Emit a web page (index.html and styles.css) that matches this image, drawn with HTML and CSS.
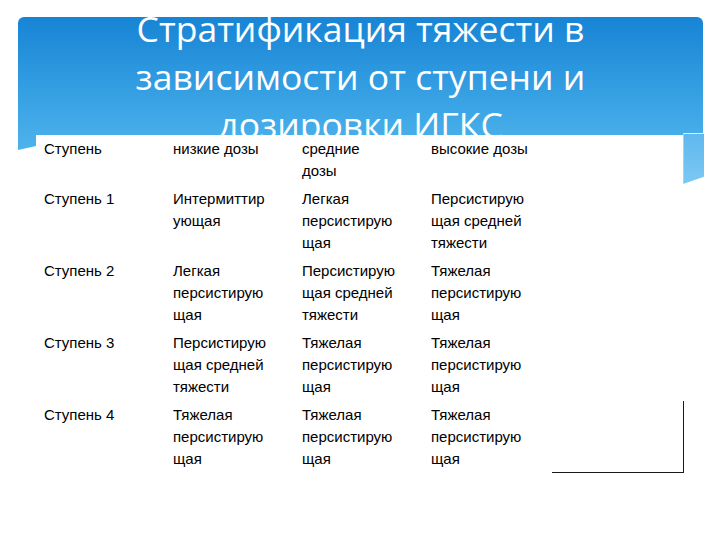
FILE: index.html
```html
<!DOCTYPE html>
<html lang="ru">
<head>
<meta charset="utf-8">
<title>Стратификация тяжести</title>
<link rel="stylesheet" href="styles.css">
</head>
<body>
<div class="slide">
  <div class="banner">
    <h1 class="title">Стратификация тяжести в<br>зависимости от ступени и<br>дозировки ИГКС</h1>
  </div>
  <div class="content">
    <table class="grid">
      <tr><td>Ступень</td><td>низкие дозы</td><td>средние<br>дозы</td><td>высокие дозы</td></tr>
      <tr><td>Ступень 1</td><td>Интермиттир<br>ующая</td><td>Легкая<br>персистирую<br>щая</td><td>Персистирую<br>щая средней<br>тяжести</td></tr>
      <tr><td>Ступень 2</td><td>Легкая<br>персистирую<br>щая</td><td>Персистирую<br>щая средней<br>тяжести</td><td>Тяжелая<br>персистирую<br>щая</td></tr>
      <tr><td>Ступень 3</td><td>Персистирую<br>щая средней<br>тяжести</td><td>Тяжелая<br>персистирую<br>щая</td><td>Тяжелая<br>персистирую<br>щая</td></tr>
      <tr><td>Ступень 4</td><td>Тяжелая<br>персистирую<br>щая</td><td>Тяжелая<br>персистирую<br>щая</td><td>Тяжелая<br>персистирую<br>щая</td></tr>
    </table>
    <div class="corner"></div>
  </div>
</div>
</body>
</html>
```

FILE: styles.css
```css
html, body {
  margin: 0;
  padding: 0;
  background: #ffffff;
}

.slide {
  width: 720px;
  height: 540px;
  overflow: hidden;
  background: #ffffff;
}

.banner {
  display: flex;
  flex-direction: column;
  margin: 17px 0 0 18px;
  width: 685px;
  height: 133px;
  overflow: hidden;
  border-radius: 6px 6px 0 0;
  background: linear-gradient(to bottom, #1784d5 0%, #2f9ae0 45%, #4eb3ec 100%);
  clip-path: polygon(0 0, 100% 0, 100% 100%, 18px 97%, 0 100%);
}

.title {
  margin: 0;
  padding-top: 0;
  font-family: "Open Sans", "DejaVu Sans", sans-serif;
  font-weight: 400;
  font-size: 35.5px;
  line-height: 48px;
  color: #ffffff;
  text-align: center;
  white-space: nowrap;
  transform: translateY(-13px);
}

.content {
  position: relative;
  display: flex;
  align-items: flex-end;
  margin: -15px 0 0 36px;
  width: 647px;
  background: #ffffff;
}

.content::after {
  content: "";
  position: absolute;
  left: 100%;
  top: -2px;
  width: 20px;
  height: 50px;
  background: linear-gradient(to bottom, #5fb8ee 0%, #7cc8f3 100%);
  border-top: 1px solid #d8eefb;
  border-left: 1px solid #9fd4f4;
  clip-path: polygon(0 0, 100% 0, 100% 86%, 0 100%);
}

.grid {
  border-collapse: collapse;
  table-layout: fixed;
  width: 516px;
  font-family: "Liberation Sans", Arial, sans-serif;
  font-size: 15px;
  line-height: 22px;
  color: #000000;
}

.grid td {
  width: 113px;
  padding: 3px 8px;
  vertical-align: top;
  white-space: nowrap;
}

.corner {
  flex: none;
  width: 131px;
  height: 71px;
  margin-right: -2px;
  border-right: 1.5px solid #1a1a1a;
  border-bottom: 1.5px solid #1a1a1a;
}
```
